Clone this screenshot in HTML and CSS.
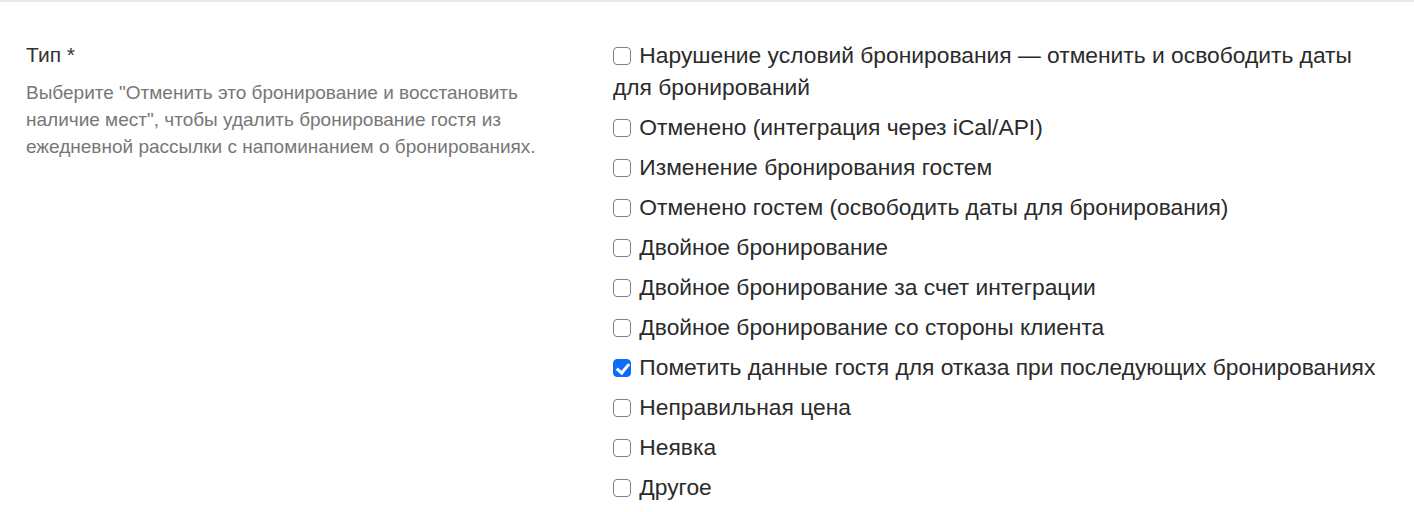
FILE: index.html
```html
<!DOCTYPE html>
<html lang="ru">
<head>
<meta charset="utf-8">
<link rel="stylesheet" href="styles.css">
</head>
<body>
<div class="field">
  <div class="field-info">
    <div class="field-label">Тип *</div>
    <p class="field-help">Выберите "Отменить это бронирование и восстановить наличие мест", чтобы удалить бронирование гостя из ежедневной рассылки с напоминанием о бронированиях.</p>
  </div>
  <div class="options">
    <label class="option"><input type="checkbox" class="cb"> Нарушение условий бронирования — отменить и освободить даты для бронирований</label>
    <label class="option"><input type="checkbox" class="cb"> Отменено (интеграция через iCal/API)</label>
    <label class="option"><input type="checkbox" class="cb"> Изменение бронирования гостем</label>
    <label class="option"><input type="checkbox" class="cb"> Отменено гостем (освободить даты для бронирования)</label>
    <label class="option"><input type="checkbox" class="cb"> Двойное бронирование</label>
    <label class="option"><input type="checkbox" class="cb"> Двойное бронирование за счет интеграции</label>
    <label class="option"><input type="checkbox" class="cb"> Двойное бронирование со стороны клиента</label>
    <label class="option"><input type="checkbox" class="cb" checked> Пометить данные гостя для отказа при последующих бронированиях</label>
    <label class="option"><input type="checkbox" class="cb"> Неправильная цена</label>
    <label class="option"><input type="checkbox" class="cb"> Неявка</label>
    <label class="option"><input type="checkbox" class="cb"> Другое</label>
  </div>
</div>
</body>
</html>
```
FILE: styles.css
```css
html, body {
  margin: 0;
  padding: 0;
  background: #fff;
}
body {
  border-top: 2px solid #e8e8e8;
  font-family: "Liberation Sans", Arial, Helvetica, sans-serif;
  color: #333;
}
.field {
  display: grid;
  grid-template-columns: 540px 1fr;
  column-gap: 47px;
  padding: 37px 26px 0 26px;
}
.field-label {
  font-size: 21px;
  line-height: 32px;
  color: #333;
}
.field-help {
  margin: 8px 0 0 0;
  font-size: 19px;
  line-height: 27px;
  color: #777;
}
.options {
  display: flex;
  flex-direction: column;
  gap: 8px;
}
.option {
  display: block;
  font-size: 22.8px;
  line-height: 32px;
  color: #2b2b2b;
}
.cb {
  -webkit-appearance: none;
  appearance: none;
  width: 18px;
  height: 18px;
  margin: 0 2px 0 0;
  border: 1.5px solid #7f7f7f;
  border-radius: 4px;
  background: #fff;
  vertical-align: -2px;
  position: relative;
}
.cb:checked {
  background: #0b6cf7;
  border-color: #0b6cf7;
}
.cb:checked::after {
  content: "";
  position: absolute;
  left: 4.5px;
  top: 0.5px;
  width: 5px;
  height: 10px;
  border: solid #fff;
  border-width: 0 3px 3px 0;
  transform: rotate(40deg);
}
```
